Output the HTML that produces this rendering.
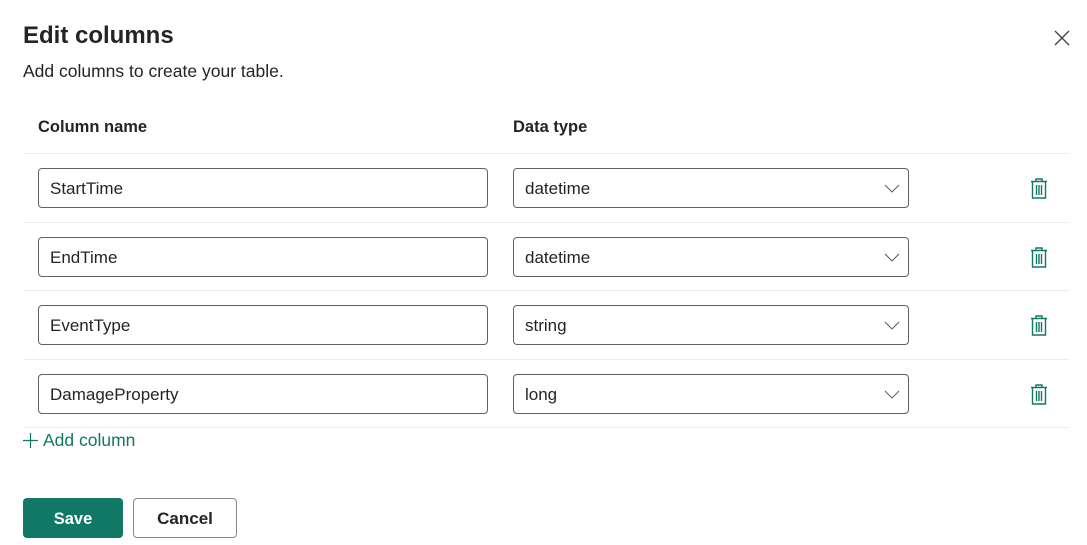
<!DOCTYPE html>
<html><head><style>
*{box-sizing:border-box;margin:0;padding:0}
body{width:1087px;height:545px;background:#fff;font-family:"Segoe UI","Liberation Sans",sans-serif;color:#242424;position:relative;overflow:hidden}
.a{position:absolute}
.t{left:23px;top:22px;font-size:24px;font-weight:600}
.s{left:23px;top:61px;font-size:17.5px}
.h{top:118px;font-size:16.5px;font-weight:700}
.line{left:23px;width:1046px;height:1px;background:#ebebeb}
.in{height:40px;border:1px solid #616161;border-radius:4px;font-size:17px;padding-left:11px;line-height:40px}
.btn{top:498px;height:40px;border-radius:4px;font-size:17px;font-weight:700;text-align:center;line-height:42px}
</style></head><body>
<div class="a t">Edit columns</div>
<div class="a s">Add columns to create your table.</div>
<svg class="a" style="left:1054px;top:30px" width="16" height="16" viewBox="0 0 16 16"><path d="M1 1L15 15M15 1L1 15" stroke="#424242" stroke-width="1.3"/></svg>
<div class="a h" style="left:38px">Column name</div>
<div class="a h" style="left:513px">Data type</div>
<div class="a line" style="top:153px"></div>
<div class="a line" style="top:222px"></div>
<div class="a line" style="top:290px"></div>
<div class="a line" style="top:359px"></div>
<div class="a line" style="top:427px"></div>

<div class="a in" style="left:38px;top:168px;width:450px">StartTime</div>
<div class="a in" style="left:513px;top:168px;width:396px">datetime</div>
<div class="a in" style="left:38px;top:237px;width:450px">EndTime</div>
<div class="a in" style="left:513px;top:237px;width:396px">datetime</div>
<div class="a in" style="left:38px;top:305px;width:450px">EventType</div>
<div class="a in" style="left:513px;top:305px;width:396px">string</div>
<div class="a in" style="left:38px;top:374px;width:450px">DamageProperty</div>
<div class="a in" style="left:513px;top:374px;width:396px">long</div>

<svg width="0" height="0" style="position:absolute"><defs>
<g id="ch"><path d="M1 1L8 8L15 1" fill="none" stroke="#616161" stroke-width="1.1"/></g>
<g id="tr" fill="none" stroke="#117865" stroke-width="1.4"><path d="M1 3.5H17M6 3.5V1H12V3.5"/><path d="M2.5 3.5V20H15.5V3.5"/><path d="M6.5 7V17M9 7V17M11.5 7V17"/></g>
</defs></svg>
<svg class="a" style="left:884px;top:184px" width="16" height="10"><use href="#ch"/></svg>
<svg class="a" style="left:884px;top:253px" width="16" height="10"><use href="#ch"/></svg>
<svg class="a" style="left:884px;top:321px" width="16" height="10"><use href="#ch"/></svg>
<svg class="a" style="left:884px;top:390px" width="16" height="10"><use href="#ch"/></svg>
<svg class="a" style="left:1030px;top:178px" width="18" height="21"><use href="#tr"/></svg>
<svg class="a" style="left:1030px;top:247px" width="18" height="21"><use href="#tr"/></svg>
<svg class="a" style="left:1030px;top:315px" width="18" height="21"><use href="#tr"/></svg>
<svg class="a" style="left:1030px;top:384px" width="18" height="21"><use href="#tr"/></svg>

<svg class="a" style="left:23px;top:433px" width="15" height="15"><path d="M7.5 0V15M0 7.5H15" stroke="#117865" stroke-width="1.2"/></svg>
<div class="a" style="left:43px;top:430px;font-size:17.5px;color:#117865">Add column</div>

<div class="a btn" style="left:23px;width:100px;background:#117865;color:#fff;font-size:16.5px">Save</div>
<div class="a btn" style="left:133px;width:104px;border:1px solid #8a8a8a;line-height:40px;font-weight:600">Cancel</div>
</body></html>
